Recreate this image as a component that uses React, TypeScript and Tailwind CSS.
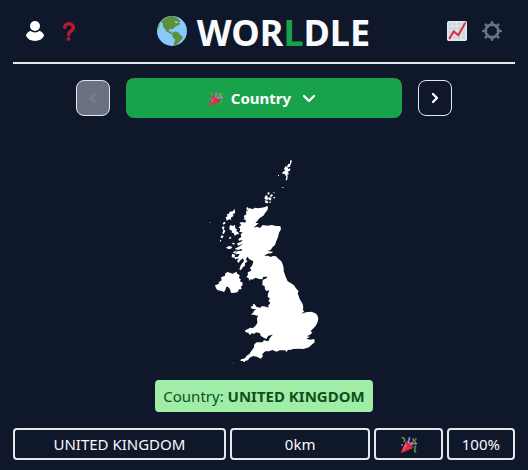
import type { ReactNode } from "react";

function UserIcon() {
  return (
    <svg viewBox="0 0 18 20" className="h-5 w-[18px] fill-white" aria-hidden="true">
      <circle cx="9" cy="5" r="5" />
      <path d="M4.400 9.700C2 10.800 0 12.700 0 14.800C1.500 18.200 5 20 9 20s7.500-1.800 9-5.200c0-2.100-2-4-4.400-5.100C11 12 7 12 4.400 9.700Z" />
    </svg>
  );
}

function QuestionIcon() {
  return (
    <svg viewBox="0 0 12 19" className="h-[19px] w-3" aria-hidden="true">
      <path d="M1.700 5.200C1.700 0.800 10.300 0.600 10.300 5.600C10.300 9 5.600 8.600 5.600 12.700" fill="none" stroke="#be1931" strokeWidth="3.400" strokeLinecap="round" />
      <circle cx="5.500" cy="17" r="1.900" fill="#be1931" />
    </svg>
  );
}

function GlobeIcon() {
  return (
    <svg viewBox="0 0 90 90" className="size-[30px]" aria-hidden="true">
      <circle cx="45" cy="45" r="45" fill="#88c9f9" />
      <path
        fill="#5c913b"
        d="M12 17C22 7 33 1 45 0L52 2L60 5L66 11L71 17L64 19L56 14L52 18L58 22L67 19L69 24L62 29L56 31L50 38L43 40L39 38L35 43L38 48L44 46L45 52L52 54L48 57L39 52L29 47L24 40L18 31L17 22Z"
      />
      <path fill="#5c913b" d="M47 50L56 46L65 50L70 57L77 61L76 68L70 74L65 80L58 87L50 89L51 80L55 71L47 64L46 55Z" />
      <path fill="#5c913b" d="M1 39L4 29L8 22L6 34L2 44Z" />
    </svg>
  );
}

function ChartIcon() {
  return (
    <svg viewBox="0 0 60 60" className="size-5" aria-hidden="true">
      <rect width="60" height="60" rx="5" fill="#e1e8ed" />
      <path fill="#ccd6dd" d="M5 5h9v9H5zM17 5h11v9H17zM31 5h11v9H31zM45 5h10v9H45zM5 17h9v11H5zM17 17h11v11H17zM31 17h11v11H31zM45 17h10v11H45zM5 31h9v11H5zM17 31h11v11H17zM31 31h11v11H31zM45 31h10v11H45zM5 45h9v10H5zM17 45h11v10H17zM31 45h11v10H31zM45 45h10v10H45z" />
      <path d="M8 52L20 31L34 43L54 7" fill="none" stroke="#dd2e44" strokeWidth="6" strokeLinecap="round" strokeLinejoin="round" />
    </svg>
  );
}

function GearIcon() {
  return (
    <svg viewBox="0 0 60 60" className="size-5" aria-hidden="true">
      <circle cx="30" cy="30" r="19" fill="none" stroke="#66757f" strokeWidth="8" />
      <path
        d="M30 4v8M30 48v8M4 30h8M48 30h8M11 11l6 6M43 43l6 6M49 11l-6 6M17 43l-6 6"
        stroke="#66757f"
        strokeWidth="8"
        strokeLinecap="round"
      />
    </svg>
  );
}

function PartyIcon({ className }: { className: string }) {
  return (
    <svg viewBox="0 0 36 36" className={className} aria-hidden="true">
      <path fill="#dd2e44" d="M11.600 7.600L.3 33.200C-.3 35 .8 36.300 2.700 35.600L28.400 24.400C23 22 15 15 11.600 7.600Z" />
      <path fill="#ea596e" d="M11 13L2 33L13 21Z" />
      <ellipse cx="20" cy="16" rx="2.500" ry="10.500" transform="rotate(-45 20 16)" fill="#be1931" />
      <path d="M18 14C14 10 19 8 19 2M22 17C27 12 31 16 35 15" fill="none" stroke="#9c82d4" strokeWidth="4" strokeLinecap="round" />
      <path d="M3 2C9 2 9 6 7 10M33 21C28 23 34 27 31 30C29 32 33 32 33 34" fill="none" stroke="#5c9e3b" strokeWidth="3.500" strokeLinecap="round" />
      <path d="M21 13C25 12 30 10 29 5C28 2 25 4 27 7C29 10 34 8 34 3" fill="none" stroke="#b3a93e" strokeWidth="2" strokeLinecap="round" />
      <circle cx="2.500" cy="18" r="2.300" fill="#9266cc" />
      <circle cx="32" cy="11" r="1.500" fill="#fdcb58" />
    </svg>
  );
}

function Chevron({ d, className }: { d: string; className: string }) {
  return (
    <svg viewBox="0 0 12 12" className={className} fill="none" stroke="currentColor" strokeWidth="2.300" strokeLinecap="round" strokeLinejoin="round" aria-hidden="true">
      <path d={d} />
    </svg>
  );
}

function CountryShape() {
  return (
    <svg viewBox="0 0 384 660" className="h-[220px] w-32 fill-white" role="img" aria-label="Country outline">
      <path d="M141 170L147 176L150 174L157 178L165 173L174 175L185 173L195 171L202 167L204 173L202 181L196 188L190 197L178 205L172 213L166 219L176 219L170 225L161 233L172 230L180 234L188 225L203 227L215 225L229 228L241 228L243 238L237 248L234 262L228 275L225 285L218 291L212 300L202 303L218 305L217 309L202 311L193 318L204 317L212 321L218 318L228 319L236 327L244 334L248 343L251 354L251 363L257 380L263 394L272 399L282 406L288 415L296 424L293 429L299 447L308 462L310 473L308 479L313 484L304 491L318 487L333 485L345 489L352 496L355 506L353 516L347 528L338 537L332 543L337 548L330 554L320 559L330 560L319 566L330 569L343 567L344 577L334 585L327 592L310 597L296 596L279 597L271 600L264 599L260 606L255 601L239 601L230 605L217 600L207 604L196 604L187 612L188 620L182 626L171 620L159 618L148 624L144 631L136 632L134 637L128 633L121 633L123 628L135 625L140 617L148 612L154 603L162 592L163 583L170 577L187 577L192 571L205 574L210 563L219 553L212 556L205 557L199 567L191 563L182 557L180 550L168 547L164 551L154 550L150 556L145 548L137 547L135 541L144 537L150 533L159 534L168 526L172 518L171 503L175 498L164 495L152 493L159 489L162 482L168 478L155 476L152 470L160 467L158 462L164 463L170 471L181 473L186 468L198 470L207 473L204 467L211 459L205 452L210 446L203 440L204 431L208 421L199 423L195 418L194 409L187 405L188 390L199 385L203 380L190 380L187 388L177 387L167 383L156 389L152 387L149 393L145 383L139 382L144 374L143 367L154 362L150 354L157 346L160 334L148 328L142 320L138 327L142 335L135 339L130 350L122 361L118 358L123 344L132 333L129 325L121 331L116 339L111 333L117 325L106 328L102 322L114 320L119 312L107 313L106 307L115 302L124 303L126 296L114 300L104 296L119 289L129 281L114 287L111 280L124 275L128 270L117 272L115 267L124 261L122 253L128 247L118 246L121 237L116 232L124 226L118 218L127 216L136 218L138 211L130 207L134 204L131 198L139 193L138 182L144 184L139 177Z" />
      <path d="M98 371L83 366L76 370L75 377L63 382L65 391L56 397L57 401L45 406L48 415L53 421L65 423L72 426L76 420L79 410L84 410L90 418L93 429L106 428L113 426L117 418L125 418L123 410L128 405L127 397L119 394L123 389L117 384L119 376L112 371L109 365Z" />
      <path d="M105 177L98 184L89 185L87 191L80 193L83 199L77 202L80 212L88 208L94 210L92 203L101 198L98 192L105 190ZM74 215L77 220L70 224L68 219ZM69 229L74 231L71 237L76 243L71 253L67 249L70 240L65 233ZM64 256L71 258L67 265L62 263ZM60 269L64 271L60 277ZM104 224L99 228L91 225L88 232L89 239L96 242L95 248L101 249L104 257L113 252L118 253L114 246L108 243L112 237L107 237Z" />
      <path d="M87 263L91 260L95 264L88 267ZM80 291L89 288L97 291L92 297L85 297L79 294ZM95 278L105 279L101 285ZM99 307L110 300L103 311ZM96 311L106 315L103 323L95 322ZM129 343L134 338L135 349L129 349Z" />
      <path d="M270 31L276 32L273 41L269 51L264 52L261 48L265 42L270 41ZM256 49L262 50L265 57L271 55L270 62L263 65L267 72L262 74L263 81L261 91L257 91L259 80L254 72L247 71L248 65L256 63L252 57Z" />
      <path d="M204 126L209 128L208 134L202 133ZM220 127L224 125L222 131ZM215 132L219 136L212 143L210 137ZM197 136L203 137L202 143L209 142L215 146L211 152L206 148L198 150L193 145ZM194 151L203 152L205 159L197 160ZM208 154L214 156L209 160ZM219 142L226 140L223 146ZM234 75h3v3h-3zM247 111h3v3h-3z" />
      <path className="opacity-40" d="M27 216h5v2h-5zM99 638h3v3h-3z" />
    </svg>
  );
}

function IconButton({ label, children }: { label: string; children: ReactNode }) {
  return (
    <button type="button" aria-label={label} className="flex h-6 w-5 items-center justify-center">
      {children}
    </button>
  );
}

function ResultCell({ className, children }: { className: string; children: ReactNode }) {
  return (
    <div className={`${className} flex h-8 items-center justify-center rounded border-2 border-gray-200 pt-px`}>
      {children}
    </div>
  );
}

export default function App() {
  return (
    <main className="min-h-screen bg-slate-900 px-[13px] font-['Noto_Sans','Open_Sans',sans-serif] text-[15px] text-gray-50">
      <header className="flex h-16 items-center justify-between border-b-2 border-gray-200 px-3">
        <div className="flex flex-1 gap-[14px]">
          <IconButton label="Profile"><UserIcon /></IconButton>
          <IconButton label="How to play"><QuestionIcon /></IconButton>
        </div>
        <h1 className="flex items-center gap-[10px] text-4xl font-bold">
          <GlobeIcon />
          <span className="pt-1">WOR<span className="text-[#18a34a]">L</span>DLE</span>
        </h1>
        <div className="flex flex-1 justify-end gap-[15px] pr-px">
          <IconButton label="Statistics"><ChartIcon /></IconButton>
          <IconButton label="Settings"><GearIcon /></IconButton>
        </div>
      </header>

      <nav className="mt-[14px] flex items-center justify-center gap-4" aria-label="Rounds">
        <button type="button" disabled aria-label="Previous round" className="flex h-9 w-[34px] items-center justify-center rounded-lg border border-gray-200 bg-gray-500 text-[#7c7f84]">
          <Chevron d="M8 2L4 6L8 10" className="size-3" />
        </button>
        <button type="button" className="flex h-10 w-[55%] items-center justify-center gap-2 rounded-lg bg-[#18a34a] pt-px font-bold text-white">
          <PartyIcon className="size-[14px]" />
          <span>Country</span>
          <Chevron d="M1 3L6 8L11 3" className="mx-1 size-3" />
        </button>
        <button type="button" aria-label="Next round" className="flex h-9 w-[34px] items-center justify-center rounded-lg border border-gray-200 text-white">
          <Chevron d="M4 2L8 6L4 10" className="size-3" />
        </button>
      </nav>

      <section className="mt-8 flex flex-col items-center">
        <CountryShape />
        <p className="mt-[10px] flex h-8 items-center rounded bg-[#a0eda8] px-2 pt-px whitespace-pre text-[#0f5019]">
          Country: <strong className="font-bold">UNITED KINGDOM</strong>
        </p>
      </section>

      <section className="mt-4 grid grid-cols-7 gap-1" aria-label="Guess result">
        <ResultCell className="col-span-3">UNITED KINGDOM</ResultCell>
        <ResultCell className="col-span-2">0km</ResultCell>
        <ResultCell className="col-span-1"><PartyIcon className="size-4" /></ResultCell>
        <ResultCell className="col-span-1">100%</ResultCell>
      </section>
    </main>
  );
}
